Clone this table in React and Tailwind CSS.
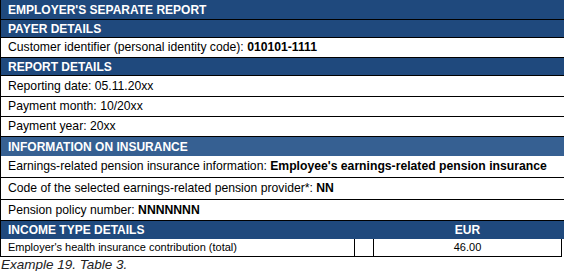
export default function App() {
  const Head = ({ children, h, light, border = true }) => (
    <div
      className={`flex items-center pl-[7px] font-bold text-white ${light ? "bg-[#366092]" : "bg-[#1f497d]"} ${border ? "border-b border-black" : ""} ${h}`}
    >
      {children}
    </div>
  );
  const Row = ({ children, h }) => (
    <div className={`flex items-center pl-[7px] text-black border-b border-black text-[12.2px] ${h}`}>
      {children}
    </div>
  );
  return (
    <div
      className="w-[564px] h-[271px] bg-white text-[12px] leading-none"
      style={{ fontFamily: '"Liberation Sans", Arial, sans-serif' }}
    >
      <div className="border-l border-black">
        <Head h="h-[20px]">EMPLOYER'S SEPARATE REPORT</Head>
        <Head h="h-[18px]">PAYER DETAILS</Head>
        <Row h="h-[20px]">
          Customer identifier (personal identity code):&nbsp;<b>010101-1111</b>
        </Row>
        <Head h="h-[18px]">REPORT DETAILS</Head>
        <Row h="h-[21px]">Reporting date: 05.11.20xx</Row>
        <Row h="h-[20px]">Payment month: 10/20xx</Row>
        <Row h="h-[20px]">Payment year: 20xx</Row>
        <Head h="h-[19px]" light border={false}>INFORMATION ON INSURANCE</Head>
        <Row h="h-[22px]">
          Earnings-related pension insurance information:&nbsp;<b>Employee's earnings-related pension insurance</b>
        </Row>
        <Row h="h-[22px]">
          Code of the selected earnings-related pension provider*:&nbsp;<b>NN</b>
        </Row>
        <Row h="h-[21px]">
          Pension policy number:&nbsp;<b>NNNNNNN</b>
        </Row>
        <div className="flex h-[18px] bg-[#1f497d] text-white font-bold">
          <div className="w-[354px] flex items-center pl-[7px]">INCOME TYPE DETAILS</div>
          <div className="w-[19px]"></div>
          <div className="w-[187px] flex items-center justify-center">EUR</div>
        </div>
      </div>
      <div className="flex w-[562px] h-[18px] border border-t-0 border-black text-[11px] text-black">
        <div className="w-[354px] flex items-center pl-[7px] border-r border-black">
          Employer's health insurance contribution (total)
        </div>
        <div className="w-[19px] border-r border-black"></div>
        <div className="flex-1 flex items-center justify-center">46.00</div>
      </div>
      <div className="pt-[1px] pl-[1px] italic text-[13.5px] text-[#222]">Example 19. Table 3.</div>
    </div>
  );
}
